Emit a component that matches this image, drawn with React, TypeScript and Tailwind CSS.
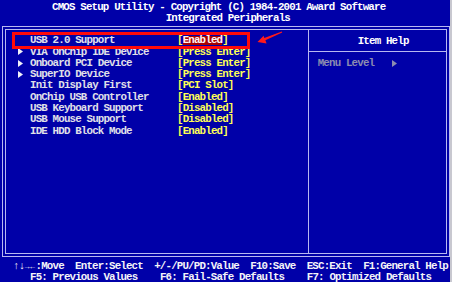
import React from "react";

type Row = { name: string; value: string; sub?: boolean; sel?: boolean };

const rows: Row[] = [
  { name: "USB 2.0 Support", value: "Enabled", sel: true },
  { name: "VIA OnChip IDE Device", value: "Press Enter", sub: true },
  { name: "Onboard PCI Device", value: "Press Enter", sub: true },
  { name: "SuperIO Device", value: "Press Enter", sub: true },
  { name: "Init Display First", value: "PCI Slot" },
  { name: "OnChip USB Controller", value: "Enabled" },
  { name: "USB Keyboard Support", value: "Disabled" },
  { name: "USB Mouse Support", value: "Disabled" },
  { name: "IDE HDD Block Mode", value: "Enabled" },
];

function Tri({ color }: { color: string }) {
  return (
    <svg width="5" height="7" viewBox="0 0 5 7" className="block">
      <polygon points="0,0 5,3.5 0,7" fill={color} />
    </svg>
  );
}

export default function App() {
  return (
    <div className="relative w-[452px] h-[282px] overflow-hidden bg-[#0000a8] font-['Liberation_Mono','DejaVu_Sans_Mono',monospace] font-bold text-[10.8px] tracking-[-0.83px] leading-[11.28px] text-[#e0e0e8]">
      <div className="h-[26px] pt-[1.6px] text-white whitespace-pre">
        <div className="pl-[52px] h-[11.28px]">CMOS Setup Utility - Copyright (C) 1984-2001 Award Software</div>
        <div className="pl-[165.7px] h-[11.28px]">Integrated Peripherals</div>
      </div>

      <div className="ml-[2px] w-[448px] h-[231px] border border-[#b8b8f0] p-[2px]">
        <div className="flex h-full border border-[#b8b8f0]">
          <div className="w-[302px] pt-[5.4px]">
            {rows.map((r) => (
              <div key={r.name} className="flex h-[11.28px] whitespace-pre">
                <div className="w-[24px] pl-[12.3px] pt-[1.6px]">
                  {r.sub ? <Tri color="#f0f0f8" /> : null}
                </div>
                <div className="w-[147px]">{r.name}</div>
                <div className="text-[#ffff55]">
                  [
                  {r.sel ? (
                    <span className="inline-block h-[9px] leading-[9px] bg-[#a80000] text-[#fff4f4]">{r.value}</span>
                  ) : (
                    r.value
                  )}
                  ]
                </div>
              </div>
            ))}
          </div>
          <div className="flex-1 border-l border-[#b8b8f0] flex flex-col">
            <div className="h-[22px] border-b border-[#b8b8f0] pt-[5.6px] pl-[48.7px] text-white whitespace-pre">Item Help</div>
            <div className="pt-[6px] pl-[8.7px] flex h-[17.4px] text-[#8c8cb0] whitespace-pre">
              <span>Menu Level</span>
              <span className="ml-[17.5px] pt-[1.6px]">
                <Tri color="#8c8cb0" />
              </span>
            </div>
          </div>
        </div>
      </div>

      <div className="pt-[4px] whitespace-pre text-[#f4f4f8]">
        <div className="pl-[13px] h-[11.28px] flex">
          <span className="inline-block w-[5.65px] text-center tracking-normal">↑</span>
          <span className="inline-block w-[5.65px] text-center tracking-normal">↓</span>
          <span className="inline-block w-[5.65px] text-center tracking-normal text-[8px]">→</span>
          <span className="inline-block w-[5.65px] text-center tracking-normal text-[8px]">←</span>
          <span>:Move  Enter:Select  +/-/PU/PD:Value  F10:Save  ESC:Exit  F1:General Help</span>
        </div>
        <div className="pl-[30px] h-[11.28px]">F5: Previous Values    F6: Fail-Safe Defaults    F7: Optimized Defaults</div>
      </div>

      <div className="absolute right-0 top-0 w-[2px] h-full bg-[#c8c8d0]" />

      <div className="absolute left-[12px] top-[32px] w-[238px] h-[17px] border-[3px] border-[#ff0a0a] pointer-events-none" />
      <svg className="absolute left-0 top-0 pointer-events-none" width="452" height="282" viewBox="0 0 452 282">
        <polygon
          points="257.5,42 263.6,35.8 264.3,37.9 281.8,31.5 282.2,32.5 265.4,40.3 266.6,43.4"
          fill="#ff1a1a"
        />
      </svg>
    </div>
  );
}
